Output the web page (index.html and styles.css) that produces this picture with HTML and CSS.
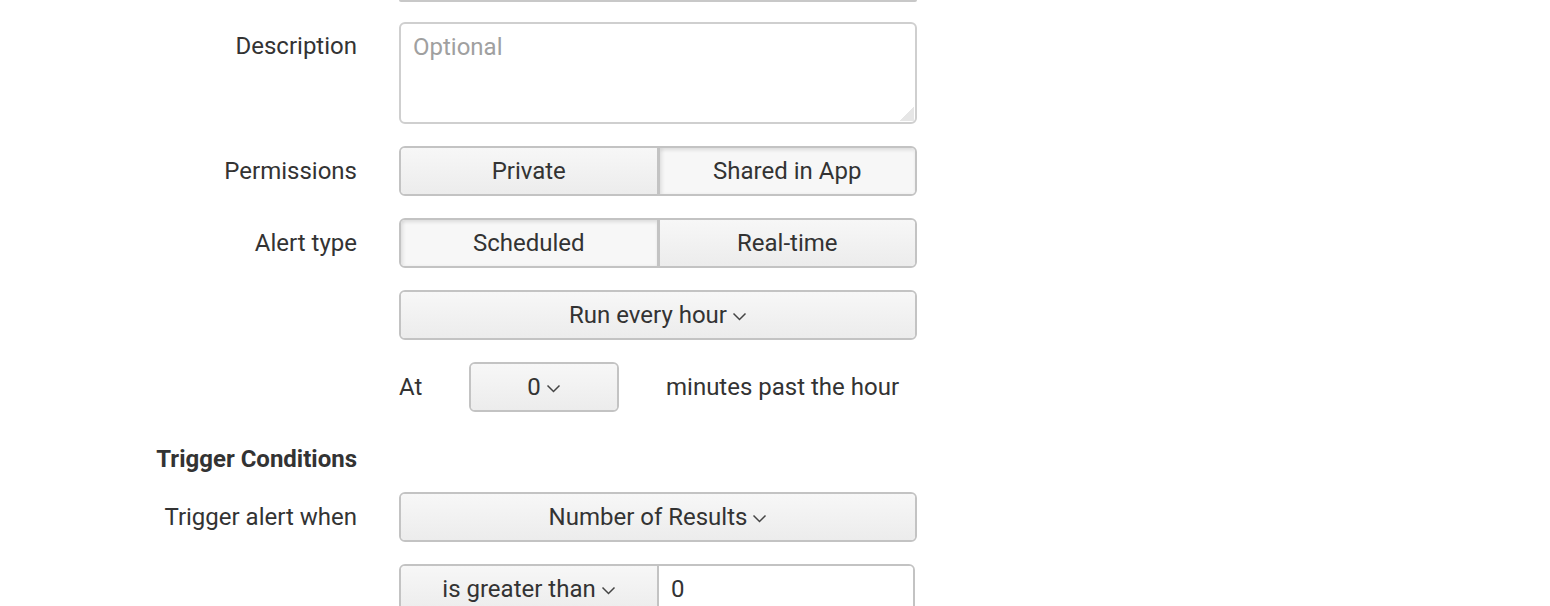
FILE: index.html
```html
<!DOCTYPE html>
<html>
<head>
<meta charset="utf-8">
<link rel="stylesheet" href="styles.css">
</head>
<body>
<div class="form">
  <div class="row stub-row">
    <div class="label"></div>
    <div class="stub"></div>
  </div>
  <div class="row desc-row">
    <div class="label top">Description</div>
    <div class="textarea"><span class="placeholder">Optional</span><span class="grip"></span></div>
  </div>
  <div class="row">
    <div class="label">Permissions</div>
    <div class="group">
      <div class="btn">Private</div>
      <div class="btn active">Shared in App</div>
    </div>
  </div>
  <div class="row">
    <div class="label">Alert type</div>
    <div class="group">
      <div class="btn active">Scheduled</div>
      <div class="btn">Real-time</div>
    </div>
  </div>
  <div class="row">
    <div class="label"></div>
    <div class="group">
      <div class="btn">Run every hour <svg class="caret" width="15" height="9" viewBox="0 0 15 9"><path d="M1.5 1.5 L7.5 7.5 L13.5 1.5" fill="none" stroke="#444" stroke-width="1.5"/></svg></div>
    </div>
  </div>
  <div class="row">
    <div class="label"></div>
    <div class="at-line">
      <span class="at">At</span>
      <div class="group small">
        <div class="btn">0 <svg class="caret" width="15" height="9" viewBox="0 0 15 9"><path d="M1.5 1.5 L7.5 7.5 L13.5 1.5" fill="none" stroke="#444" stroke-width="1.5"/></svg></div>
      </div>
      <span class="past">minutes past the hour</span>
    </div>
  </div>
  <div class="section">Trigger Conditions</div>
  <div class="row">
    <div class="label">Trigger alert when</div>
    <div class="group">
      <div class="btn">Number of Results <svg class="caret" width="15" height="9" viewBox="0 0 15 9"><path d="M1.5 1.5 L7.5 7.5 L13.5 1.5" fill="none" stroke="#444" stroke-width="1.5"/></svg></div>
    </div>
  </div>
  <div class="row">
    <div class="label"></div>
    <div class="combo">
      <div class="btn">is greater than <svg class="caret" width="15" height="9" viewBox="0 0 15 9"><path d="M1.5 1.5 L7.5 7.5 L13.5 1.5" fill="none" stroke="#444" stroke-width="1.5"/></svg></div>
      <div class="input">0</div>
    </div>
  </div>
</div>
</body>
</html>
```

FILE: styles.css
```css
html, body {
  margin: 0;
  padding: 0;
  background: #fff;
  overflow: hidden;
}
body {
  font-family: Roboto, "Liberation Sans", sans-serif;
  font-size: 24px;
  color: #333;
}
.form {
  display: flex;
  flex-direction: column;
  gap: 22px;
  width: 917px;
}
.row {
  display: grid;
  grid-template-columns: 357px 518px;
  column-gap: 42px;
  align-items: center;
}
.stub-row {
  height: 0;
  align-items: start;
}
.stub {
  height: 0;
  border-bottom: 2px solid #c8c8c8;
  border-radius: 0 0 6px 6px;
}
.label {
  text-align: right;
  white-space: nowrap;
}
.desc-row {
  align-items: start;
}
.label.top {
  padding-top: 10px;
}
.textarea {
  position: relative;
  height: 98px;
  border: 2px solid #cfcfcf;
  border-radius: 6px;
  box-sizing: content-box;
  padding: 0;
}
.placeholder {
  display: block;
  color: #a0a0a0;
  padding: 9px 0 0 12px;
}
.grip {
  position: absolute;
  right: 1px;
  bottom: 1px;
  width: 14px;
  height: 14px;
  background: linear-gradient(135deg, transparent 50%, #e6e6e6 50%);
}
.group {
  display: flex;
  height: 50px;
  box-sizing: border-box;
  border: 2px solid #c3c3c3;
  border-radius: 6px;
  overflow: hidden;
}
.btn {
  flex: 1;
  display: flex;
  align-items: center;
  justify-content: center;
  gap: 5px;
  background: linear-gradient(#f7f7f7, #ececec);
  white-space: nowrap;
}
.btn + .btn {
  border-left: 3px solid #c3c3c3;
}
.btn.active {
  background: #f7f7f7;
  box-shadow: inset 0 3px 3px rgba(0,0,0,0.07), inset 3px 0 3px rgba(0,0,0,0.06);
}
.caret {
  margin-top: 2px;
}
.at-line {
  display: flex;
  align-items: center;
  height: 50px;
}
.at {
  width: 70px;
}
.group.small {
  width: 150px;
}
.past {
  margin-left: 47px;
  white-space: nowrap;
}
.section {
  font-weight: bold;
  width: 357px;
  text-align: right;
  margin-top: 12px;
  margin-bottom: -2px;
  line-height: 26px;
}
.combo {
  display: flex;
  height: 50px;
  width: 516px;
  box-sizing: border-box;
  border: 2px solid #c3c3c3;
  border-radius: 6px;
  overflow: hidden;
}
.combo .btn {
  flex: 0 0 256px;
  border-right: 2px solid #c3c3c3;
}
.combo .input {
  flex: 1;
  display: flex;
  align-items: center;
  padding-left: 12px;
  background: #fff;
}
```
